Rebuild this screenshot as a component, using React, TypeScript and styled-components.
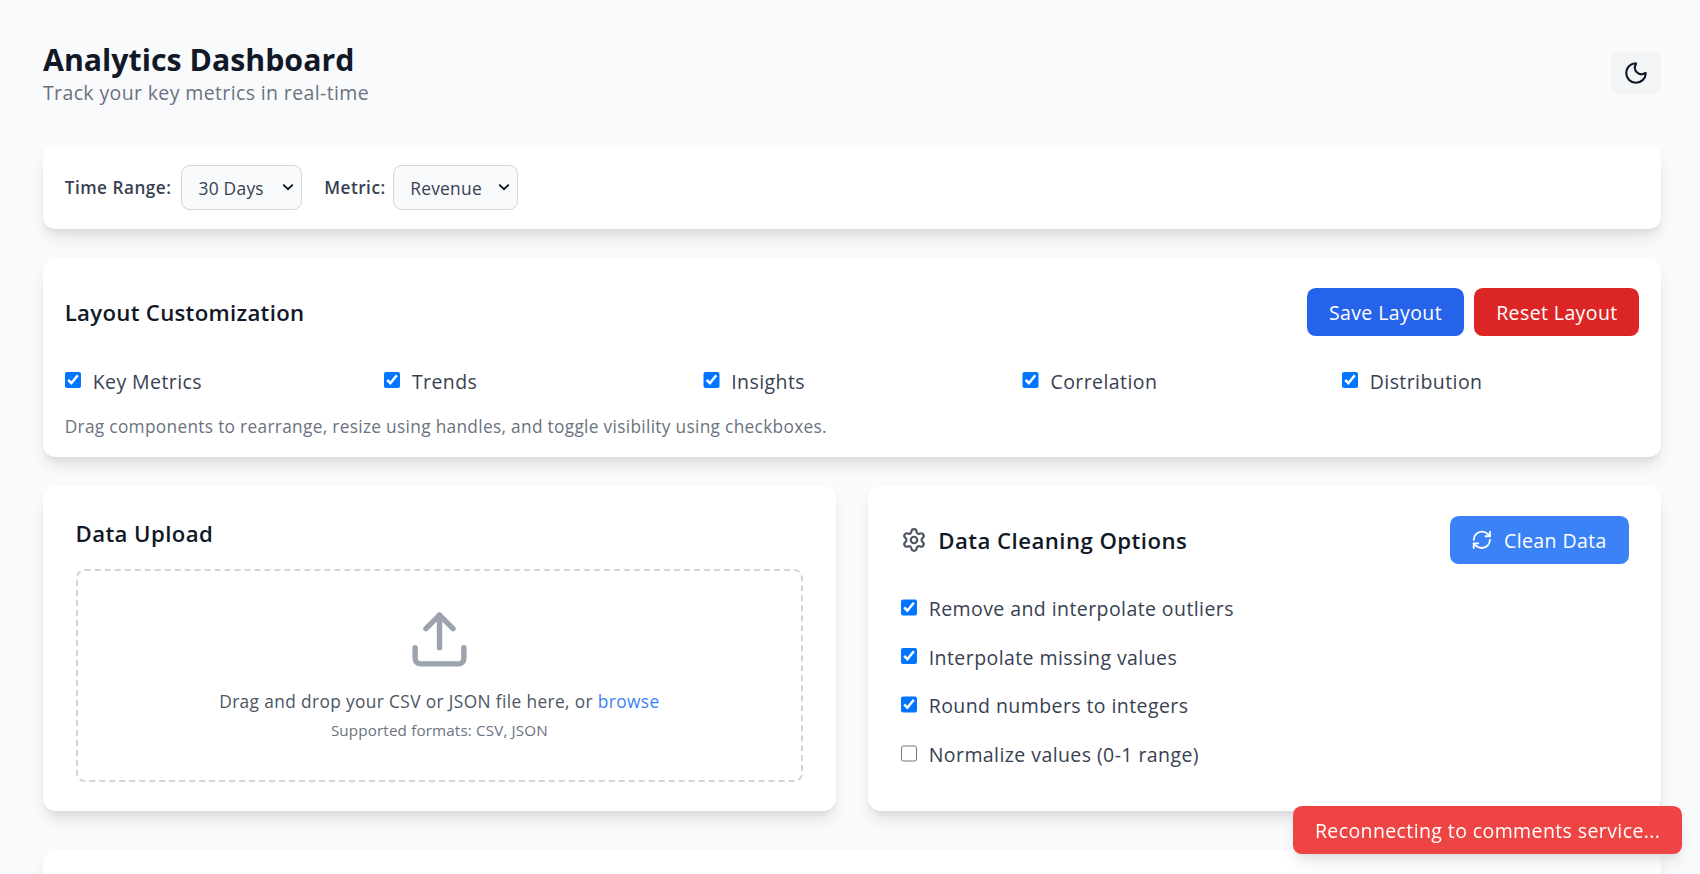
import * as React from "react";
import styled, { createGlobalStyle } from "styled-components";
import { Moon, RefreshCw, Settings, Upload } from "lucide-react";

const GlobalStyle = createGlobalStyle`
    html, body {
        margin: 0;
        padding: 0;
        height: 874px;
        overflow: hidden;
        background: #f9fafb;
        font-family: "Open Sans", "Noto Sans", sans-serif;
    }
`;

const chevron =
    "data:image/svg+xml,%3Csvg xmlns='http://www.w3.org/2000/svg' width='12' height='8' viewBox='0 0 12 8' fill='none'%3E%3Cpath d='M1.2 1.6 6 6.2l4.8-4.6' stroke='%23111827' stroke-width='2'/%3E%3C/svg%3E";

const Page = styled.div`
    box-sizing: border-box;
    height: 874px;
    overflow: hidden;
    padding: 41px 39px 0 43px;
    background: #f9fafb;
`;

const Header = styled.header`
    display: flex;
    justify-content: space-between;
    align-items: flex-start;
    height: 104px;
`;

const Title = styled.h1`
    margin: 0;
    font-size: 30.3px;
    line-height: 38px;
    font-weight: 700;
    color: #111827;
`;

const Subtitle = styled.p`
    margin: 1px 0 0;
    font-size: 19.5px;
    line-height: 26px;
    color: #6b7280;
    letter-spacing: 0.37px;
`;

const ThemeButton = styled.button`
    display: flex;
    align-items: center;
    justify-content: center;
    width: 50px;
    height: 43px;
    margin-top: 10px;
    padding: 0;
    border: 0;
    border-radius: 8.7px;
    background: #f3f4f6;
    color: #111827;
`;

const Card = styled.section`
    box-sizing: border-box;
    background: #fff;
    border-radius: 13px;
    box-shadow: 0 10.8px 16.3px -3.2px rgba(0, 0, 0, 0.1), 0 4.3px 6.5px -2.2px rgba(0, 0, 0, 0.05);
`;

const FilterCard = styled(Card)`
    display: flex;
    align-items: center;
    height: 84px;
    margin-bottom: 29px;
    padding: 0 21.7px;
`;

const FilterLabel = styled.label<{ $gap: number }>`
    margin-right: ${(p) => p.$gap}px;
    font-size: 17.2px;
    font-weight: 600;
    color: #374151;
    letter-spacing: 0.5px;
`;

const Select = styled.select<{ $width: number }>`
    box-sizing: border-box;
    width: ${(p) => p.$width}px;
    height: 45px;
    margin-right: 21.7px;
    padding: 1px 8px 0 16px;
    border: 1px solid #d1d5db;
    border-radius: 8.7px;
    appearance: none;
    background: #f9fafb url("${chevron}") no-repeat right 7px center;
    color: #374151;
    font-family: inherit;
    font-size: 17.4px;
    letter-spacing: 0.25px;
`;

const LayoutCard = styled(Card)`
    height: 199px;
    margin-bottom: 29px;
    padding: 30px 21.7px 0;
`;

const LayoutTop = styled.div`
    display: flex;
    justify-content: space-between;
    align-items: center;
    height: 48px;
    margin-bottom: 32px;
`;

const CardTitle = styled.h2`
    margin: 0;
    font-size: 22.2px;
    font-weight: 600;
    color: #111827;
    letter-spacing: 0.3px;
`;

const ButtonRow = styled.div`
    display: flex;
    gap: 10.8px;
`;

const ActionButton = styled.button<{ $bg: string }>`
    display: flex;
    align-items: center;
    gap: 11px;
    height: 48px;
    padding: 0 21.7px;
    border: 0;
    border-radius: 8.7px;
    background: ${(p) => p.$bg};
    color: #fff;
    font-family: inherit;
    font-size: 19.5px;
    letter-spacing: 0.4px;
    white-space: nowrap;
`;

const ToggleGrid = styled.div`
    display: grid;
    grid-template-columns: repeat(5, 1fr);
    gap: 21.7px;
`;

const CheckRow = styled.label`
    display: flex;
    align-items: center;
    gap: 11.5px;
    height: 26px;
    font-size: 19.5px;
    color: #374151;
    letter-spacing: 0.42px;
`;

const Check = styled.input`
    flex: none;
    width: 16.5px;
    height: 16.5px;
    margin: 0 0 2px;
    accent-color: #0075ff;
`;

const Hint = styled.p`
    margin: 21px 0 0;
    font-size: 17.3px;
    line-height: 24px;
    color: #6b7280;
    letter-spacing: 0.31px;
`;

const Columns = styled.div`
    display: grid;
    grid-template-columns: 1fr 1fr;
    gap: 32.5px;
    margin-bottom: 39px;
`;

const PanelCard = styled(Card)<{ $top: number }>`
    height: 325px;
    padding: ${(p) => p.$top}px 32.5px 0;
`;

const UploadTitle = styled(CardTitle)`
    margin-bottom: 20px;
    line-height: 30px;
    letter-spacing: 0.4px;
`;

const DropZone = styled.div`
    box-sizing: border-box;
    display: flex;
    flex-direction: column;
    align-items: center;
    height: 213px;
    padding-top: 36px;
    border: 2.2px dashed #d1d5db;
    border-radius: 8.7px;
    color: #9ca3af;
`;

const DropText = styled.p`
    margin: 18px 0 0;
    font-size: 17.3px;
    line-height: 24px;
    color: #4b5563;
    letter-spacing: 0.38px;
`;

const Browse = styled.span`
    color: #3b82f6;
`;

const DropNote = styled.p`
    margin: 6px 0 0;
    font-size: 15.2px;
    line-height: 20px;
    color: #6b7280;
    letter-spacing: 0.15px;
`;

const CleanTop = styled.div`
    display: flex;
    justify-content: space-between;
    align-items: center;
    height: 48px;
    margin-bottom: 31.5px;
`;

const CleanHeading = styled.div`
    display: flex;
    align-items: center;
    gap: 11.5px;
    color: #4b5563;
`;

const CleanTitle = styled(CardTitle)`
    letter-spacing: 0.45px;
`;

const OptionList = styled.div`
    display: flex;
    flex-direction: column;
    gap: 22.6px;
`;

const NextCard = styled(Card)`
    height: 200px;
`;

const Toast = styled.div`
    position: fixed;
    right: 18px;
    bottom: 20px;
    box-sizing: border-box;
    display: flex;
    align-items: center;
    height: 48px;
    padding: 0 21.7px;
    border-radius: 8.7px;
    background: #ef4444;
    color: #fff;
    font-size: 19.5px;
    letter-spacing: 0.4px;
    white-space: nowrap;
    box-shadow: 0 10.8px 16.3px -3.2px rgba(0, 0, 0, 0.1), 0 4.3px 6.5px -2.2px rgba(0, 0, 0, 0.05);
`;

const sections = ["Key Metrics", "Trends", "Insights", "Correlation", "Distribution"];
const options = [
    { label: "Remove and interpolate outliers", on: true },
    { label: "Interpolate missing values", on: true },
    { label: "Round numbers to integers", on: true },
    { label: "Normalize values (0-1 range)", on: false },
];

export default function App() {
    return (
        <Page>
            <GlobalStyle />
            <Header>
                <div>
                    <Title>Analytics Dashboard</Title>
                    <Subtitle>Track your key metrics in real-time</Subtitle>
                </div>
                <ThemeButton aria-label="Toggle theme">
                    <Moon size={26} strokeWidth={2} />
                </ThemeButton>
            </Header>

            <FilterCard>
                <FilterLabel $gap={10}>Time Range:</FilterLabel>
                <Select $width={121} defaultValue="30">
                    <option value="30">30 Days</option>
                    <option value="7">7 Days</option>
                </Select>
                <FilterLabel $gap={7.5}>Metric:</FilterLabel>
                <Select $width={125} defaultValue="revenue">
                    <option value="revenue">Revenue</option>
                    <option value="users">Users</option>
                </Select>
            </FilterCard>

            <LayoutCard>
                <LayoutTop>
                    <CardTitle>Layout Customization</CardTitle>
                    <ButtonRow>
                        <ActionButton $bg="#2563eb">Save Layout</ActionButton>
                        <ActionButton $bg="#dc2626">Reset Layout</ActionButton>
                    </ButtonRow>
                </LayoutTop>
                <ToggleGrid>
                    {sections.map((name) => (
                        <CheckRow key={name}>
                            <Check type="checkbox" defaultChecked />
                            {name}
                        </CheckRow>
                    ))}
                </ToggleGrid>
                <Hint>Drag components to rearrange, resize using handles, and toggle visibility using checkboxes.</Hint>
            </LayoutCard>

            <Columns>
                <PanelCard $top={33}>
                    <UploadTitle>Data Upload</UploadTitle>
                    <DropZone>
                        <Upload size={65} strokeWidth={2} />
                        <DropText>
                            Drag and drop your CSV or JSON file here, or <Browse>browse</Browse>
                        </DropText>
                        <DropNote>Supported formats: CSV, JSON</DropNote>
                    </DropZone>
                </PanelCard>
                <PanelCard $top={30}>
                    <CleanTop>
                        <CleanHeading>
                            <Settings size={26} strokeWidth={2} />
                            <CleanTitle>Data Cleaning Options</CleanTitle>
                        </CleanHeading>
                        <ActionButton $bg="#3b82f6">
                            <RefreshCw size={21.7} strokeWidth={2} />
                            Clean Data
                        </ActionButton>
                    </CleanTop>
                    <OptionList>
                        {options.map((option) => (
                            <CheckRow key={option.label}>
                                <Check type="checkbox" defaultChecked={option.on} />
                                {option.label}
                            </CheckRow>
                        ))}
                    </OptionList>
                </PanelCard>
            </Columns>

            <NextCard />
            <Toast>Reconnecting to comments service...</Toast>
        </Page>
    );
}
